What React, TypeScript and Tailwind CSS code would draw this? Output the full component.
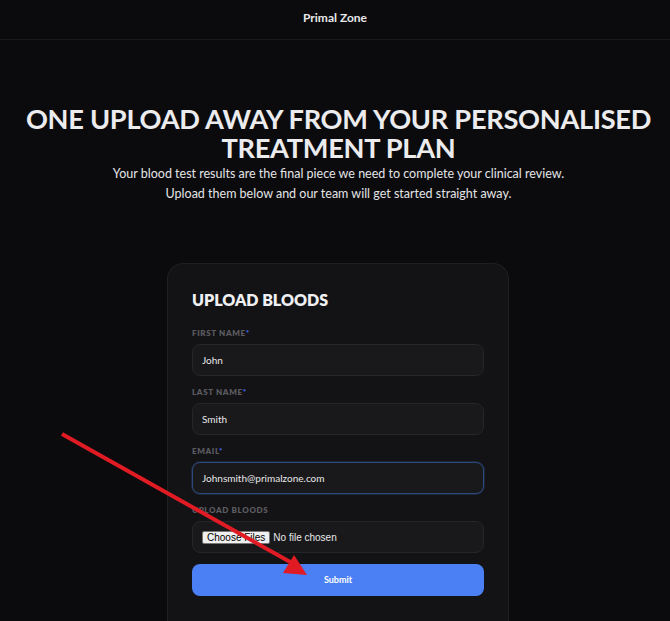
import React from 'react';

const Field: React.FC<{ label: string; required?: boolean; children: React.ReactNode }> = ({ label, required, children }) => (
  <div className="flex flex-col">
    <label className="mb-[6px] text-[8px] font-extrabold uppercase leading-[10px] tracking-[0.08em] text-[#5b5b60]">
      {label}
      {required && <span className="text-[#3d5ee0]">*</span>}
    </label>
    {children}
  </div>
);

export default function App() {
  return (
    <div className="relative min-h-[621px] overflow-hidden bg-[#0b0b0d] text-white" style={{ fontFamily: 'Lato, "Noto Sans", sans-serif' }}>
      {/* Header */}
      <header className="flex h-[40px] items-center justify-center border-b border-[#18181b] pb-[4px]">
        <span className="text-[12px] font-bold text-[#e8e8ea]">Primal Zone</span>
      </header>

      {/* Hero */}
      <section className="mt-[64px] flex flex-col items-center pl-[7px] text-center">
        <h1 className="text-[27.2px] font-bold uppercase leading-[29px] tracking-[-0.01em] text-[#ececef]">
          One upload away from your personalised
          <br />
          treatment plan
        </h1>
        <p className="mt-[2px] text-[12.5px] leading-[20px] text-[#e4e4e7]">
          Your blood test results are the final piece we need to complete your clinical review.
          <br />
          Upload them below and our team will get started straight away.
        </p>
      </section>

      {/* Card */}
      <div className="mt-[59px] flex justify-center pl-[6px]">
        <div className="w-[342px] rounded-t-[16px] border border-b-0 border-[#1f1f22] bg-[#131315] px-[24px] pb-[30px] pt-[25px]">
          <h2 className="text-[16px] font-extrabold leading-[22px] text-[#f0f0f2]">UPLOAD BLOODS</h2>
          <form className="mt-[17px] flex flex-col gap-[11px]">
            <Field label="First name" required>
              <input
                defaultValue="John"
                className="h-[32px] w-full rounded-[8px] border border-[#26262a] bg-[#19191b] px-[9px] text-[10px] text-[#e8e8ea] outline-none"
              />
            </Field>
            <Field label="Last name" required>
              <input
                defaultValue="Smith"
                className="h-[32px] w-full rounded-[8px] border border-[#26262a] bg-[#19191b] px-[9px] text-[10px] text-[#e8e8ea] outline-none"
              />
            </Field>
            <Field label="Email" required>
              <input
                defaultValue="Johnsmith@primalzone.com"
                className="h-[32px] w-full rounded-[8px] border border-[#2d4a7c] bg-[#19191b] px-[9px] text-[10px] text-[#e8e8ea] shadow-[0_0_0_1px_rgba(45,74,124,0.35)] outline-none"
              />
            </Field>
            <Field label="Upload bloods">
              <div className="flex h-[32px] w-full items-center rounded-[8px] border border-[#26262a] bg-[#19191b] px-[9px]">
                <input
                  type="file"
                  multiple
                  className="text-[10px] text-[#e8e8ea] file:mr-[3px] file:rounded-[2px] file:border file:border-solid file:border-[#767676] file:bg-[#efefef] file:px-[4px] file:py-0 file:text-[10px] file:leading-[11px] file:text-black"
                  style={{ fontFamily: 'Arial, "Liberation Sans", sans-serif' }}
                />
              </div>
            </Field>
            <button
              type="button"
              className="h-[32px] w-full rounded-[8px] bg-[#4b7ff4] text-[9px] font-bold text-white"
            >
              Submit
            </button>
          </form>
        </div>
      </div>

      {/* Annotation arrow */}
      <svg className="pointer-events-none absolute left-0 top-0" width="670" height="621" viewBox="0 0 670 621">
        <line x1="62" y1="434" x2="292" y2="563" stroke="#e01b24" strokeWidth="4" strokeLinecap="butt" />
        <polygon points="307,575 283,573 294,555" fill="#e01b24" />
      </svg>
    </div>
  );
}
